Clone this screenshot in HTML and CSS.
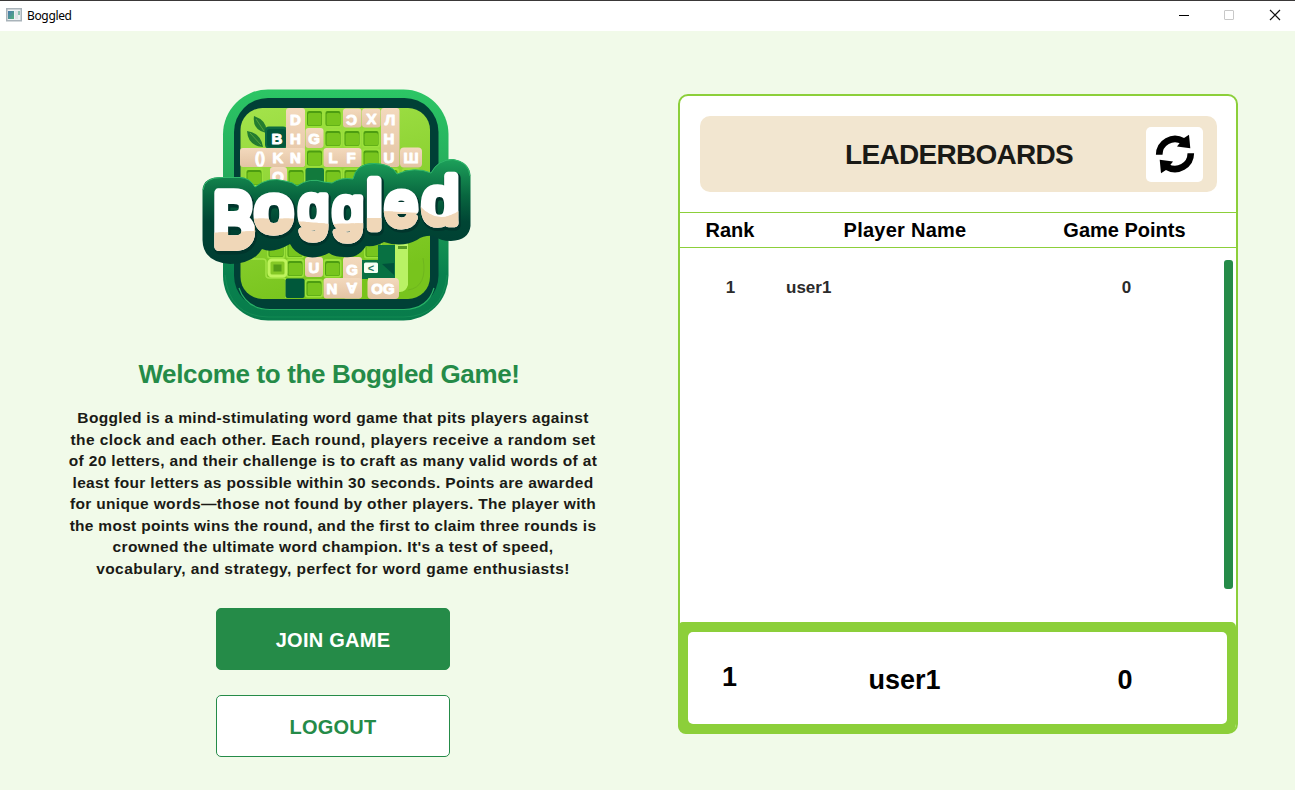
FILE: index.html
```html
<!DOCTYPE html>
<html lang="en">
<head>
<meta charset="utf-8">
<title>Boggled</title>
<link rel="stylesheet" href="styles.css">
</head>
<body>
<header class="titlebar">
  <svg class="app-icon" width="16" height="14" viewBox="0 0 16 14"><defs><linearGradient id="ai" x2="1" y2="1"><stop stop-color="#4a78b0"/><stop offset="1" stop-color="#52b07a"/></linearGradient></defs><rect x=".75" y=".75" width="14.5" height="12" fill="#eef1f3" stroke="#a9b3ba" stroke-width="1.5"/><rect x="2" y="3" width="6" height="8" fill="url(#ai)"/><rect x="9" y="3" width="3" height="8" fill="#dfe3e6"/><rect x="12" y="3" width="2" height="4" fill="#8cc0b0"/></svg>
  <span class="window-title">Boggled</span>
  <svg class="window-controls" width="104" height="14" viewBox="0 0 104 14"><path d="M0 7.5h10" stroke="#000" fill="none"/><rect x="45.5" y="2.500" width="9" height="9" rx=".5" fill="none" stroke="#c8c8c8"/><path d="M91 2l10 10M101 2L91 12" stroke="#111" stroke-width="1.2"/></svg>
</header>
<main class="screen">
  <section class="intro">
    <svg class="logo" width="276" height="240" viewBox="200 85 276 240">
      <defs>
        <linearGradient id="ring" x2="0" y2="1"><stop stop-color="#2cc665"/><stop offset=".45" stop-color="#23a65a"/><stop offset=".8" stop-color="#08814e"/><stop offset="1" stop-color="#087c4b"/></linearGradient>
        <linearGradient id="field" x1="0" x2=".3" y2="1"><stop stop-color="#a4e34b"/><stop offset="1" stop-color="#78c41d"/></linearGradient>
        <linearGradient id="badge" x2="0" y2="1"><stop stop-color="#1da15a"/><stop offset=".35" stop-color="#08663f"/><stop offset=".6" stop-color="#004534"/><stop offset="1" stop-color="#003d32"/></linearGradient>
        <linearGradient id="sand" x2="0" y2="1"><stop stop-color="#f3d9bd"/><stop offset="1" stop-color="#e3c4a4"/></linearGradient>
        <clipPath id="lower"><path d="M205 233L254 231V218.500H295V221L331 224L366 223V218H382V211L420 213V206Q438 226 460 210V267H205z"/></clipPath>
        <g id="leaf"><rect width="18" height="18.500" rx="2.500" fill="#9be13b"/><rect x="1.500" y="2" width="15" height="15" rx="2" fill="#4d9d11"/><rect x="2.500" y="4" width="13.500" height="12.500" rx="1.500" fill="#78c51e"/></g>
        <g id="word" class="wordmark">
          <text transform="translate(213.3 245.8) scale(.617 .765)">B</text>
          <text transform="translate(255 231.2) scale(.68 .644)">o</text>
          <text transform="translate(298.5 227.4) scale(.542 .585)">g</text>
          <text transform="translate(332.8 227.5) scale(.55 .58)">g</text>
          <text transform="translate(366.7 227.8) scale(.67 .67)">l</text>
          <text transform="translate(385 224.5) scale(.583 .606)">e</text>
          <text transform="translate(422.2 222.8) scale(.652 .657)">d</text>
        </g>
      </defs>
      <rect x="223" y="89.500" width="225.500" height="231" rx="45" fill="url(#ring)"/>
      <path d="M225 275Q229 316 268 317H404Q443 316 447 275" fill="none" stroke="#2aab68" stroke-width="1" opacity=".3"/>
      <rect x="234" y="98" width="204.500" height="211.500" rx="34" fill="#004036"/>
      <path d="M239 288Q246 309 270 309.500H404Q428 309 434 288" fill="none" stroke="#27b166" stroke-width="1.200"/>
      <rect x="240.500" y="108" width="189.500" height="191" rx="22" fill="url(#field)"/>
      <path d="M254 116Q268 121 266 133Q252 130 254 116zM247 131Q261 133 263 147Q248 146 247 131z" fill="#237c30"/><path d="M256 119l8 12M250 133l11 12" stroke="#55a03d" fill="none"/>
      <g>
        <use href="#leaf" x="305.500" y="109"/><use href="#leaf" x="324" y="109"/>
        <use href="#leaf" x="324" y="129"/><use href="#leaf" x="343" y="129"/><use href="#leaf" x="362" y="129"/>
        <use href="#leaf" x="305.500" y="148.500"/><use href="#leaf" x="362" y="148.500"/>
        <use href="#leaf" x="245" y="168"/><use href="#leaf" x="287" y="168"/><use href="#leaf" x="324" y="168"/><use href="#leaf" x="343" y="168"/><use href="#leaf" x="381" y="168"/><use href="#leaf" x="402" y="168"/>
        <use href="#leaf" x="267" y="240"/><use href="#leaf" x="286" y="240"/><use href="#leaf" x="364" y="240"/>
        <use href="#leaf" x="286" y="259"/><use href="#leaf" x="323.500" y="259"/><use href="#leaf" x="305" y="279"/>
      </g>
      <rect x="305.500" y="168" width="18.500" height="19" rx="2" fill="#127a3c"/>
      <rect x="265" y="126.500" width="22" height="22" rx="4" fill="#0b6a42"/><rect x="267" y="129" width="19" height="18" rx="3" fill="#00563b"/>
      <g fill="url(#sand)">
        <rect x="286" y="108" width="19" height="59" rx="3"/><rect x="343" y="108.500" width="18.500" height="19" rx="3"/><rect x="362" y="108.500" width="18.500" height="19" rx="3"/><rect x="381" y="108" width="18.500" height="59" rx="3"/>
        <rect x="305.500" y="128" width="18" height="20" rx="3"/><rect x="240" y="148" width="65" height="19" rx="3"/><rect x="323.500" y="148" width="38" height="19" rx="3"/><rect x="400" y="147.500" width="22" height="20" rx="4"/><rect x="270" y="167" width="17" height="20" rx="3"/>
      </g>
      <path d="M244 259h19q3 0 3 3v13q0 3 3 3h14q3 0 3 3v17" fill="none" stroke="#a4e346" stroke-width="1.500"/>
      <rect x="269" y="260" width="17" height="16" rx="3" fill="#85c926" stroke="#bff35d" stroke-width="3"/><rect x="273.500" y="264.500" width="8" height="7" fill="#569d16"/>
      <path d="M378 245h18v34h-34v-19h16z" fill="#087142"/><path d="M382 264l12 11v-12z" fill="#00513b"/>
      <path d="M395 243h13v42q-2 7-8 7h-32v-14h27z" fill="#b9f265"/><path d="M408 290q20-3 15-32" fill="none" stroke="#6fb61d"/><path d="M398 246h9v3h-9z" fill="#579b25"/>
      <rect x="285.500" y="278.500" width="19" height="19.500" rx="2" fill="#00583a"/>
      <g fill="url(#sand)"><rect x="305" y="257" width="18" height="20" rx="3"/><rect x="343" y="257" width="19" height="41.500" rx="3"/><rect x="323.500" y="278" width="38" height="20.500" rx="3"/><rect x="367.500" y="278" width="31.500" height="21" rx="4"/></g>
      <rect x="364" y="262.500" width="14" height="10.500" rx="1.500" fill="#f5fff3"/>
      <g class="tile-letters">
        <text x="295.500" y="125">D</text><text x="277" y="143.500">B</text><text x="295.500" y="143.500">H</text><text x="314" y="143.500">G</text>
        <text x="260" y="163">()</text><text x="278" y="163">K</text><text x="295.500" y="163">N</text><text x="333" y="163">L</text><text x="351" y="163">F</text>
        <text transform="translate(351.500 124.500) scale(-1 1)">C</text><text transform="translate(371.500 113.500) scale(1 -1)">X</text><text x="390" y="125">Л</text>
        <text x="389" y="143.500">H</text><text x="389" y="163">U</text><text x="411" y="162.500">Ш</text><text x="278" y="182">O</text>
        <text x="314" y="272.500">U</text><text x="352" y="275">G</text><text x="332" y="293.500">N</text><text transform="translate(352 283) scale(1 -1)">A</text><text x="383" y="293.500">OG</text>
        <text class="tile-dark" x="371" y="271.500">&lt;</text>
      </g>
      <path d="M202.500 190Q203 177 222 177H240Q250 178 255 187Q269 176 285 181Q293 182 297 186Q310 177 324 182L332 183Q341 177 353 179Q356 163 374 163Q392 164 397 174Q415 166 431 173Q438 159 453 159Q470 162 470.500 176V226Q469 240 451 241Q440 241 434 236Q424 235 417 240Q402 248 384 242Q376 247 366 246Q358 259 344 257Q334 257 329 253Q315 260 304 256Q294 252 290 244Q273 254 262 249Q253 264 230 264Q203 262 202.500 240z" fill="url(#badge)"/>
      <path d="M203 190Q204 177.500 222 177.500H240Q250 178 255 187Q269 176 285 181Q293 182 297 186Q310 177 324 182L332 183Q341 177 353 179Q356 163.500 374 163.500Q392 164 397 174Q415 166 431 173Q438 159.500 453 159.500Q469 162 470 176" fill="none" stroke="#31b86b" stroke-width="1"/>
      <use href="#word" class="word-shadow" x="1" y="2"/>
      <use href="#word" class="word-white"/>
      <g clip-path="url(#lower)"><use href="#word" class="word-cream"/></g>
    </svg>
    <h1 class="welcome">Welcome to the Boggled Game!</h1>
    <p class="about">
      <span>Boggled is a mind-stimulating word game that pits players against</span>
      <span class="loose">the clock and each other. Each round, players receive a random set</span>
      <span>of 20 letters, and their challenge is to craft as many valid words of at</span>
      <span>least four letters as possible within 30 seconds. Points are awarded</span>
      <span>for unique words—those not found by other players. The player with</span>
      <span class="tight">the most points wins the round, and the first to claim three rounds is</span>
      <span>crowned the ultimate word champion. It's a test of speed,</span>
      <span class="loose">vocabulary, and strategy, perfect for word game enthusiasts!</span>
    </p>
    <button class="btn join">JOIN GAME</button>
    <button class="btn logout">LOGOUT</button>
  </section>
  <section class="board">
    <div class="board-head">
      <h2>LEADERBOARDS</h2>
      <button class="refresh" aria-label="Refresh"><svg width="57" height="55" viewBox="1146 127 57 55"><g id="arc"><path d="M1159.200 154.800A15.800 15.800 0 0 1 1183 141.200" fill="none" stroke="#000" stroke-width="6.600"/><path d="M1189 134.800L1190.300 148.300L1177 146.600L1180.500 142L1184 138z"/></g><use href="#arc" transform="rotate(180 1175 154)"/></svg></button>
    </div>
    <div class="columns"><span>Rank</span><span class="name-head">Player Name</span><span>Game Points</span></div>
    <div class="list">
      <div class="row"><span>1</span><span>user1</span><span>0</span></div>
      <div class="scrollbar"></div>
    </div>
    <div class="me"><span class="me-rank">1</span><span class="me-name">user1</span><span>0</span></div>
  </section>
</main>
</body>
</html>
```
FILE: styles.css
```css
* { box-sizing: border-box; }
body { margin: 0; width: 1295px; height: 790px; overflow: hidden; background: #f1fae9; font-family: "Liberation Sans", Arial, sans-serif; font-weight: 700; color: #1a1a16; }
h1, h2, p { margin: 0; }
button { font: inherit; padding: 0; }
.titlebar { height: 31px; background: #fff; border-top: 1px solid #3a3838; display: flex; align-items: center; padding: 0 12px 0 6px; }
.app-icon { margin-bottom: 2px; }
.window-title { font: 400 12px "Noto Sans", sans-serif; color: #000; margin: 0 0 2px 5px; letter-spacing: -.35px; }
.window-controls { margin-left: auto; margin-bottom: 2px; }
.screen { display: flex; height: 759px; }
.intro { width: 678px; padding: 54px 12px 0 0; display: flex; flex-direction: column; align-items: center; }
.logo { margin-left: 10px; flex: none; }
.wordmark text { font: 400 100px "Liberation Sans", sans-serif; stroke-linejoin: round; stroke-linecap: round; }
.word-white { fill: #fff; stroke: #fff; stroke-width: 13px; }
.word-cream { fill: #f0d7b8; stroke: #f0d7b8; stroke-width: 13px; }
.word-shadow { fill: #00352c; stroke: #00352c; stroke-width: 17px; }
.tile-letters { font: 700 15px "Liberation Sans", sans-serif; fill: #fff; stroke: #fff; stroke-width: 1px; stroke-linejoin: round; text-anchor: middle; }
.tile-dark { font-size: 11px; fill: #27795d; stroke: none; }
.welcome { width: 400px; margin: 33px 8px 0 0; font-size: 26px; line-height: 32px; letter-spacing: -.35px; text-align: center; white-space: nowrap; color: #258b48; }
.about { margin-top: 17px; font-size: 15.500px; line-height: 21.570px; letter-spacing: .34px; text-align: center; }
.about span { display: block; white-space: nowrap; }
.about .loose { letter-spacing: .44px; }
.about .tight { letter-spacing: .29px; }
.btn { width: 234px; height: 62px; border: 1px solid #258b48; border-radius: 5px; font-size: 20px; letter-spacing: .25px; padding-top: 3px; flex: none; }
.join { margin-top: 28px; background: #258b48; color: #fff; }
.logout { margin-top: 25px; background: #fff; color: #258b48; }
.board { width: 560px; height: 640px; margin-top: 63px; border: 2px solid #8ccf3a; border-radius: 10px; background: #fff; display: flex; flex-direction: column; }
.board-head { height: 76px; margin: 20px 19px 20px 20px; border-radius: 10px; background: #f2e6d0; display: flex; align-items: center; padding: 0 14px 0 145px; justify-content: space-between; }
.board-head h2 { padding-top: 2px; font-size: 28px; line-height: 32px; letter-spacing: -.7px; }
.refresh { width: 57px; height: 55px; border: 0; border-radius: 5px; background: #fff; }
.refresh svg { display: block; }
.columns { height: 36px; border: solid #8ccf3a; border-width: 1px 0; display: grid; grid-template-columns: 100px 250px 1fr; align-items: center; text-align: center; font-size: 20px; color: #000; }
.columns .name-head { letter-spacing: .25px; }
.columns span:last-child { padding-right: 17px; }
.list { flex: 1; display: flex; justify-content: space-between; padding: 12px 3px 0 0; }
.row { width: 530px; height: 55px; display: grid; grid-template-columns: 101px 250px 1fr; align-items: center; font-size: 17px; color: #2b2b2b; }
.row span:nth-child(odd) { text-align: center; }
.row span:nth-child(2) { padding-left: 5px; }
.row span:last-child { padding-left: 12px; }
.scrollbar { width: 9px; height: 329px; border-radius: 3px; background: #258b48; }
.me { height: 112px; margin: 0 0 -2px -2px; border: 10px solid #8ccf3a; border-right-width: 9px; border-radius: 5px 5px 10px 8px; background: #8ccf3a; display: grid; grid-template-columns: 83px 1fr 210px; font-size: 27px; color: #000; }
.me span { background: #fff; padding: 4px 0 0 6px; display: grid; place-items: center; }
.me .me-name { padding-left: 21px; }
.me .me-rank { padding: 0 0 2px; border-radius: 5px 0 0 5px; }
.me span:last-child { border-radius: 0 5px 5px 0; }
```
